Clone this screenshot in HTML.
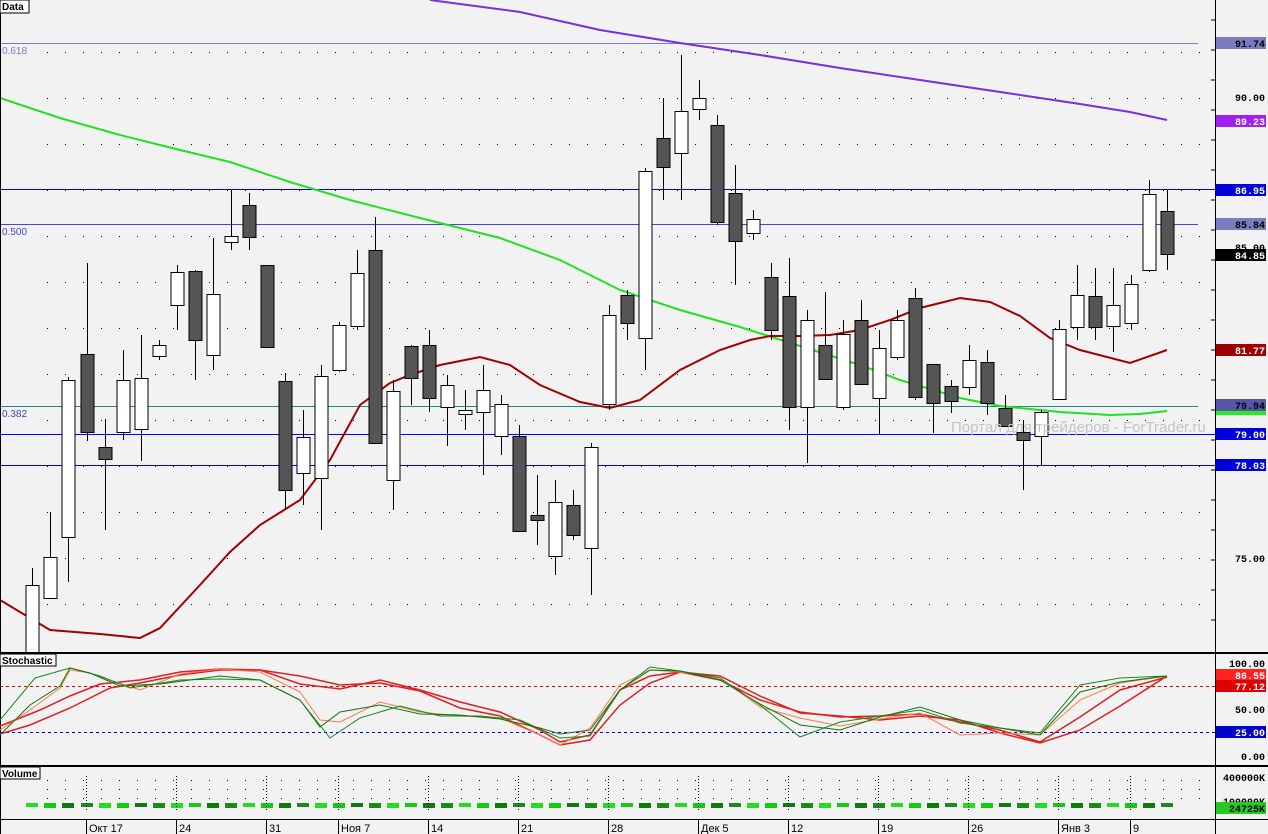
<!DOCTYPE html>
<html><head><meta charset="utf-8"><style>
html,body{margin:0;padding:0;background:#f2f2f2;overflow:hidden}
svg{display:block;font-family:"Liberation Sans",sans-serif}
</style></head><body>
<svg id="s" width="1268" height="834" xmlns="http://www.w3.org/2000/svg">
<rect width="1268" height="834" fill="#f2f2f2"/>
<g id="grid"></g>
<line x1="0" y1="43.5" x2="1198" y2="43.5" stroke="#7a7ac8" stroke-width="1"/>
<text x="2" y="54" font-size="10" fill="#7a7ac8">0.618</text>
<rect x="0" y="189" width="1215" height="1" fill="#0000ff"/>
<line x1="0" y1="224.5" x2="1198" y2="224.5" stroke="#4444dd"/>
<text x="2" y="235" font-size="10" fill="#4444dd">0.500</text>
<line x1="0" y1="406.5" x2="1198" y2="406.5" stroke="#208888"/>
<text x="2" y="417" font-size="10" fill="#4444aa">0.382</text>
<rect x="0" y="434" width="1215" height="1" fill="#0000ff"/>
<rect x="0" y="465" width="1215" height="1" fill="#0000ff"/>
<polyline fill="none" stroke="#7a2ee0" stroke-width="2" points="430,0 520,12 600,30 680,43 760,55 840,68 920,80 1000,92 1080,104 1130,112 1167,120"/>
<polyline fill="none" stroke="#22e022" stroke-width="2" points="0,98 60,118 120,135 180,150 230,162 290,182 350,200 420,218 500,238 560,260 620,290 680,310 740,327 800,346 860,365 900,380 960,398 1000,406 1060,412 1110,415 1140,414 1167,411"/>
<polyline fill="none" stroke="#a00000" stroke-width="2" points="0,600 50,630 100,634 140,638 160,628 200,585 230,552 260,525 300,500 330,460 360,405 390,383 410,375 440,365 480,357 510,365 540,385 580,402 610,408 640,400 680,370 720,350 750,340 770,336 800,336 830,335 860,330 890,320 920,308 960,298 990,302 1020,316 1050,338 1080,350 1130,363 1167,350"/>
<g id="candles"></g>
<text x="951" y="432" font-size="15" fill="#c4c4c4">Портал для трейдеров - ForTrader.ru</text>
<line x1="0" y1="653" x2="1268" y2="653" stroke="#000" stroke-width="2"/>
<line x1="0" y1="766" x2="1268" y2="766" stroke="#000" stroke-width="2"/>
<line x1="0" y1="819.5" x2="1268" y2="819.5" stroke="#000"/>
<line x1="1215.5" y1="0" x2="1215.5" y2="834" stroke="#000"/>
<line x1="0.5" y1="0" x2="0.5" y2="834" stroke="#000"/>
<line x1="0" y1="686.5" x2="1215" y2="686.5" stroke="#e00000" stroke-dasharray="3,3"/>
<line x1="0" y1="732.5" x2="1215" y2="732.5" stroke="#0000cc" stroke-dasharray="3,3"/>
<polyline fill="none" stroke="#e02020" stroke-width="1.5" points="0,734 30,725 70,708 110,688 140,683 180,675 220,670 260,670 300,676 340,685 380,683 420,691 460,708 500,716 540,735 560,745 590,740 620,705 650,683 680,672 720,676 760,696 800,713 840,716 880,720 920,716 960,720 1000,733 1040,743 1080,730 1120,706 1167,676"/>
<polyline fill="none" stroke="#e02020" stroke-width="1.5" points="0,726 40,710 70,696 100,684 140,680 180,672 220,669 260,670 300,684 340,689 380,680 420,690 460,702 500,712 540,730 560,742 590,735 620,690 650,676 680,672 720,680 760,700 800,712 840,717 880,716 920,714 960,722 1000,730 1040,742 1080,717 1120,690 1167,677"/>
<polyline fill="none" stroke="#ff7a4a" stroke-width="1" points="0,730 30,710 60,688 70,670 90,673 110,680 140,690 180,674 220,669 260,672 300,692 320,720 340,722 380,702 420,712 460,716 500,718 540,735 560,745 590,728 620,685 650,670 680,672 720,678 760,707 800,718 840,726 880,719 920,713 960,735 1000,733 1040,735 1080,700 1120,683 1167,676"/>
<polyline fill="none" stroke="#1a8a1a" stroke-width="1" points="0,720 35,678 70,668 100,676 130,688 180,680 220,679 260,680 300,700 330,738 360,718 400,706 440,716 480,716 520,720 560,738 590,736 620,690 650,667 680,671 720,678 760,705 800,737 840,722 880,716 920,710 960,723 1000,728 1040,733 1080,685 1120,678 1167,676"/>
<polyline fill="none" stroke="#117711" stroke-width="1" points="0,735 30,705 60,686 70,668 90,673 120,686 160,684 220,676 260,680 300,700 320,727 340,712 380,705 420,714 460,715 500,719 540,728 560,734 590,730 620,690 650,670 680,671 720,680 760,704 800,725 840,730 880,717 920,707 960,720 1000,728 1040,735 1080,692 1120,682 1167,676"/>
<g id="vol"></g>
<g font-family="Liberation Sans,sans-serif" font-weight="bold" font-size="10">
<rect x="0" y="0" width="29" height="13" fill="#fff" stroke="#000"/><text x="2" y="10">Data</text>
<rect x="0" y="654" width="56" height="12" fill="#fff" stroke="#000"/><text x="2" y="664">Stochastic</text>
<rect x="0" y="767" width="40" height="12" fill="#fff" stroke="#000"/><text x="2" y="777">Volume</text>
</g>
<g id="axis" font-family="Liberation Mono,monospace" font-weight="bold" font-size="10" text-anchor="end"></g>
<g font-family="Liberation Sans,sans-serif" font-size="11" fill="#000" id="dates"></g>
</svg>
<script>
var NS="http://www.w3.org/2000/svg";
function el(p,t,a,txt){var e=document.createElementNS(NS,t);for(var k in a)e.setAttribute(k,a[k]);if(txt!=null)e.textContent=txt;document.getElementById(p).appendChild(e);return e;}
for(var x=47;x<1210;x+=18){for(var y=52;y<650;y+=46){el('grid','rect',{x:x,y:y,width:1,height:1,fill:'#000'});}}
var C=[[32,568,585,652,652,1],[50,512,557,598,598,1],[68,377,380,537,582,1],[87,263,354,432,441,0],[105,419,447,459,530,0],[123,350,380,432,440,1],[141,335,378,429,461,1],[159,340,345,356,360,1],[177,265,272,305,330,1],[195,270,271,340,380,0],[213,238,294,355,370,1],[231,190,236,242,250,1],[249,193,205,237,250,0],[267,265,265,347,347,0],[285,373,381,490,510,0],[303,410,437,473,505,1],[321,365,376,478,530,1],[339,322,325,370,372,1],[357,250,273,326,330,1],[375,217,250,443,444,0],[393,380,391,480,510,1],[411,345,346,378,405,0],[429,330,345,398,412,0],[447,375,385,407,446,1],[465,390,410,414,430,1],[483,365,390,412,475,1],[501,395,404,436,455,1],[519,425,436,531,532,0],[537,475,515,520,545,0],[555,480,502,556,575,1],[573,490,505,535,540,0],[591,443,447,548,595,1],[609,305,315,404,410,1],[627,290,295,323,340,0],[645,168,171,338,370,1],[663,98,138,167,200,0],[681,55,111,153,200,1],[699,80,98,109,120,1],[717,115,125,222,225,0],[735,165,193,241,285,0],[753,210,219,233,240,1],[771,263,277,330,340,0],[789,258,296,407,430,0],[807,310,320,407,463,1],[825,292,345,379,380,0],[843,320,334,407,410,1],[861,300,320,384,385,0],[879,330,348,398,435,1],[897,310,320,357,360,1],[915,288,298,397,400,0],[933,365,364,403,433,0],[951,380,386,401,413,0],[969,345,360,387,395,1],[987,350,362,403,415,0],[1005,395,408,426,427,0],[1023,420,432,440,490,0],[1041,410,412,436,465,1],[1059,320,329,399,400,1],[1077,265,295,327,340,1],[1095,268,296,327,340,0],[1113,268,305,326,352,1],[1131,275,284,323,330,1],[1149,180,194,270,272,1],[1167,190,211,254,270,0]];
C.forEach(function(c){var x=c[0];el('candles','line',{x1:x+.5,y1:c[1],x2:x+.5,y2:c[4],stroke:'#000'});el('candles','rect',{x:x-6,y:c[2]+.5,width:13,height:Math.max(2,c[3]-c[2]),fill:c[5]?'#fff':'#555',stroke:'#000'});});
var cols=['#22dd22','#11cc11','#117711','#1a8a1a'];
C.forEach(function(c,i){el('vol','rect',{x:c[0]-6,y:803,width:12,height:i%3==0?4:5,fill:cols[i%4]});});
for(var x=47;x<1210;x+=18){for(var y=780;y<800;y+=9){el('vol','rect',{x:x,y:y,width:1,height:1,fill:'#000'});}}
var D=[[86,'Окт 17'],[176,'24'],[266,'31'],[338,'Ноя 7'],[428,'14'],[518,'21'],[608,'28'],[698,'Дек 5'],[788,'12'],[878,'19'],[968,'26'],[1058,'Янв 3'],[1130,'9']];
D.forEach(function(d){el('dates','line',{x1:d[0]+.5,y1:820,x2:d[0]+.5,y2:834,stroke:'#000'});el('dates','line',{x1:d[0]+.5,y1:776,x2:d[0]+.5,y2:810,stroke:'#000','stroke-dasharray':'1,2'});el('dates','text',{x:d[0]+3,y:832},d[1]);});
var A=[[43,'91.74','#7b7bbf','#000'],[121,'89.23','#a020f0','#fff'],[190,'86.95','#0000dd','#fff'],[224,'85.84','#7b7bbf','#000'],[255,'84.85','#000','#fff'],[350,'81.77','#a00000','#fff'],[405,'79.94','#5555aa','#000'],[434,'79.00','#0000dd','#fff'],[465,'78.03','#0000dd','#fff'],[675,'86.55','#ff2020','#fff'],[686,'77.12','#e00000','#fff'],[732,'25.00','#0000cc','#fff'],[808,'24725K','#22cc22','#000']];
el('axis','text',{x:1265,y:101},'90.00');el('axis','text',{x:1265,y:562},'75.00');el('axis','text',{x:1265,y:251},'85.00');
el('axis','text',{x:1265,y:667},'100.00');el('axis','text',{x:1265,y:713},'50.00');el('axis','text',{x:1265,y:760},'0.00');
el('axis','text',{x:1265,y:781},'400000K');el('axis','text',{x:1265,y:805},'100000K');
el('axis','rect',{x:1216,y:410,width:50,height:5,fill:'#22ee22'});
A.forEach(function(a){el('axis','rect',{x:1216,y:a[0]-6,width:50,height:12,fill:a[2]});el('axis','text',{x:1265,y:a[0]+4,fill:a[3]},a[1]);});
for(var y=20;y<650;y+=30){el('axis','line',{x1:1211,y1:y,x2:1215,y2:y,stroke:'#000'});}
</script>
</body></html>
